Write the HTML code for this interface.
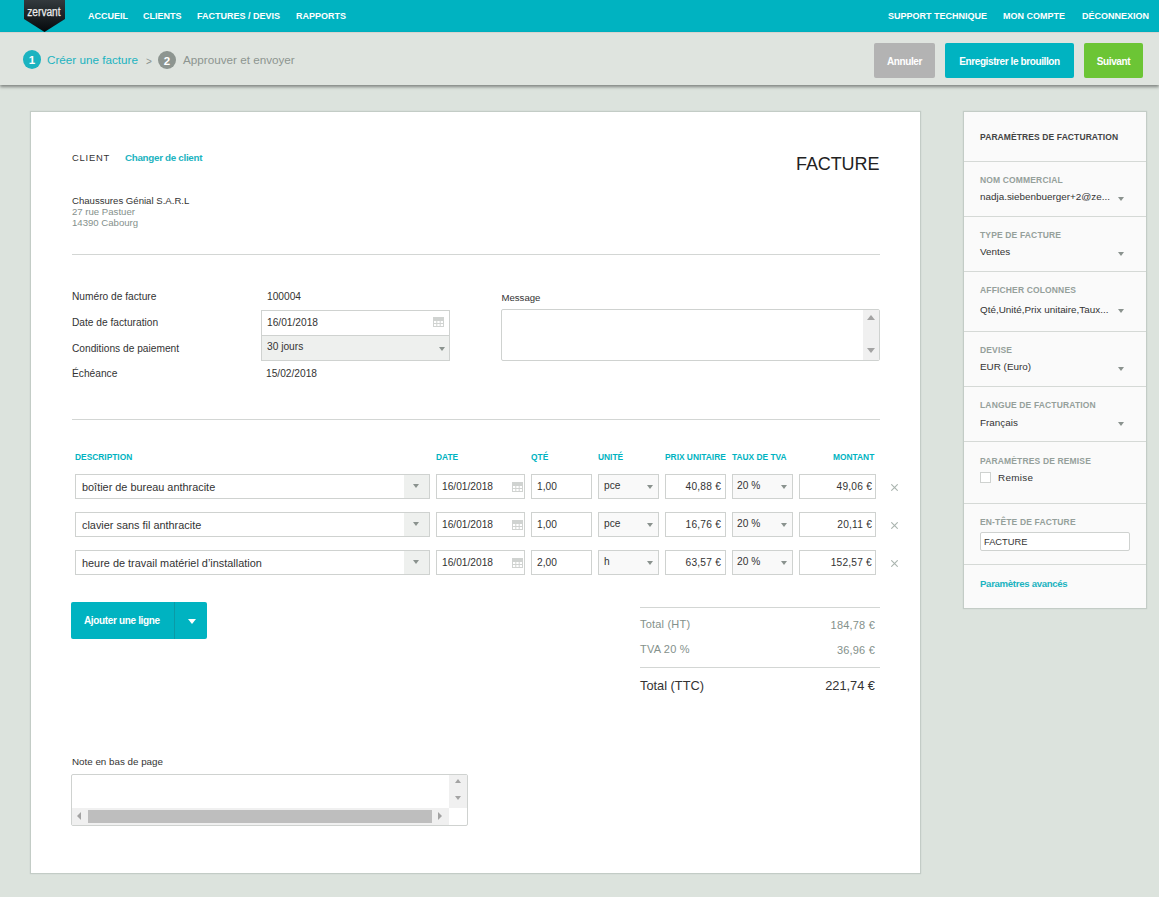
<!DOCTYPE html>
<html><head><meta charset="utf-8"><style>
*{margin:0;padding:0;box-sizing:border-box}
html,body{width:1159px;height:897px;overflow:hidden;background:#dce3dd;font-family:"Liberation Sans",sans-serif;color:#333}
.a{position:absolute}
.t{position:absolute;white-space:nowrap;line-height:1}
#top{position:absolute;left:0;top:0;width:1159px;height:32px;background:#00b3c1}
.nav{color:#fff;font-weight:bold;font-size:9px}
#sub{position:absolute;left:0;top:32px;width:1159px;height:53px;background:#dfe4df;box-shadow:0 2px 3px rgba(0,0,0,.42);border-top:1px solid #d9d3cf}
.btn{position:absolute;top:43px;height:35px;border-radius:2px;color:#fff;font-weight:bold;font-size:10px;text-align:center;line-height:37px;letter-spacing:-0.4px}
#card{position:absolute;left:31px;top:112px;width:889px;height:761px;background:#fff;box-shadow:0 0 1px 1px rgba(150,160,155,.35)}
#side{position:absolute;left:964px;top:112px;width:182px;height:496px;background:#fafafa;box-shadow:0 0 1px 1px rgba(150,160,155,.35)}
.hr{position:absolute;height:1px;background:#d3d6d4}
.inp{position:absolute;border:1px solid #cfd2d0;background:#fff;height:25px}
.ddb{position:absolute;background:#eef0ee}
.tri{position:absolute;width:0;height:0;border-left:3.5px solid transparent;border-right:3.5px solid transparent;border-top:4px solid #8a928e}
.th{color:#00b3c1;font-weight:bold;font-size:8.4px}
.sl{color:#95a09b;font-weight:bold;font-size:8.5px;letter-spacing:0.15px}
.sv{color:#333;font-size:9.9px}
.sd{position:absolute;left:0;width:182px;height:1px;background:#d5d9d6}
.x{position:absolute;width:10px;height:10px}
</style></head><body>
<div id="top"></div>
<svg class="a" style="left:24px;top:0" width="41" height="33" viewBox="0 0 41 33">
<defs><linearGradient id="lg" x1="0" y1="0" x2="0" y2="1"><stop offset="0" stop-color="#33393d"/><stop offset="1" stop-color="#05090c"/></linearGradient></defs>
<path d="M0 0H41V19L20.5 32L0 19Z" fill="url(#lg)"/></svg>
<svg class="a" style="left:24px;top:0" width="41" height="33"><text x="3.3" y="16.4" font-family="Liberation Sans" font-size="12" textLength="33.3" lengthAdjust="spacingAndGlyphs" fill="#ececec" stroke="#ececec" stroke-width="0.25">zervant</text></svg>
<div class="t nav" style="left:88px;top:11.5px">ACCUEIL</div>
<div class="t nav" style="left:143px;top:11.5px">CLIENTS</div>
<div class="t nav" style="left:197px;top:11.5px">FACTURES / DEVIS</div>
<div class="t nav" style="left:296px;top:11.5px">RAPPORTS</div>
<div class="t nav" style="left:888px;top:11.5px">SUPPORT TECHNIQUE</div>
<div class="t nav" style="left:1003px;top:11.5px">MON COMPTE</div>
<div class="t nav" style="left:1082px;top:11.5px">DÉCONNEXION</div>
<div id="sub"></div>
<div class="a" style="left:23px;top:50px;width:18px;height:18.5px;border-radius:50%;background:#1bb3c0;color:#fff;font-size:11.5px;font-weight:bold;text-align:center;line-height:20.5px">1</div>
<div class="t" style="left:47px;top:54px;font-size:11.7px;color:#1bb3c0">Créer une facture</div>
<div class="t" style="left:146px;top:57px;font-size:10px;color:#8a928e">&gt;</div>
<div class="a" style="left:158px;top:50.5px;width:18px;height:18.5px;border-radius:50%;background:#8d9590;color:#fff;font-size:11.5px;font-weight:bold;text-align:center;line-height:20.5px">2</div>
<div class="t" style="left:183px;top:54px;font-size:11.7px;color:#8d9590">Approuver et envoyer</div>
<div class="btn" style="left:874px;width:61px;background:#b3b3b3">Annuler</div>
<div class="btn" style="left:945px;width:129px;background:#00b3c1">Enregistrer le brouillon</div>
<div class="btn" style="left:1084px;width:59px;background:#6cc535">Suivant</div>
<div id="card"></div><div id="side"></div>
<div class="t" style="left:72px;top:152.5px;font-size:9.4px;color:#333;letter-spacing:0.8px">CLIENT</div>
<div class="t" style="left:125px;top:152.5px;font-size:9.8px;color:#1bb3c0;font-weight:bold;letter-spacing:-0.3px">Changer de client</div>
<div class="t" style="left:796px;top:154.5px;font-size:18px;color:#222;letter-spacing:-0.1px">FACTURE</div>
<div class="t" style="left:72px;top:195.5px;font-size:9.6px;color:#333">Chaussures Génial S.A.R.L</div>
<div class="t" style="left:72px;top:206.5px;font-size:9.6px;color:#85918c">27 rue Pastuer</div>
<div class="t" style="left:72px;top:217.5px;font-size:9.6px;color:#85918c">14390 Cabourg</div>
<div class="hr" style="left:72px;top:254px;width:808px"></div>
<div class="t" style="left:72px;top:292px;font-size:10.2px">Numéro de facture</div>
<div class="t" style="left:267px;top:292px;font-size:10.2px">100004</div>
<div class="t" style="left:72px;top:318px;font-size:10.2px">Date de facturation</div>
<div class="inp" style="left:261px;top:310px;width:189px;height:26px"></div>
<div class="t" style="left:267px;top:318px;font-size:10.2px">16/01/2018</div>
<svg class="a" style="left:433px;top:317px" width="11" height="10" viewBox="0 0 11 10"><g fill="none" stroke="#d0d3d1" stroke-width="1"><rect x="0.5" y="0.5" width="10" height="9"/><path d="M0.5 3.5H10.5M0.5 6.5H10.5M3.8 3V10M7.2 3V10"/></g><rect x="0.5" y="0.5" width="10" height="2.5" fill="#d0d3d1"/></svg>
<div class="t" style="left:72px;top:344px;font-size:10.2px">Conditions de paiement</div>
<div class="a" style="left:261px;top:335px;width:189px;height:26px;background:#eef0ee;border:1px solid #cfd2d0"></div>
<div class="t" style="left:267px;top:342px;font-size:10.2px">30 jours</div>
<div class="tri" style="left:438.5px;top:346.5px"></div>
<div class="t" style="left:72px;top:369px;font-size:10.2px">Échéance</div>
<div class="t" style="left:266px;top:369px;font-size:10.2px">15/02/2018</div>
<div class="t" style="left:501.5px;top:292.5px;font-size:9.6px">Message</div>
<div class="inp" style="left:501px;top:309px;width:379px;height:52px;border-radius:2px"></div>
<div class="ddb" style="left:863px;top:310px;width:16px;height:50px;background:#f0f0f0"></div>
<div class="tri" style="left:867px;top:314.5px;border-left-width:4px;border-right-width:4px;border-top:0;border-bottom:5px solid #a3a3a3"></div>
<div class="tri" style="left:867px;top:347.5px;border-left-width:4px;border-right-width:4px;border-top:5px solid #a3a3a3"></div>
<div class="hr" style="left:72px;top:419px;width:808px"></div>
<div class="t th" style="left:75px;top:452.5px">DESCRIPTION</div>
<div class="t th" style="left:436px;top:452.5px">DATE</div>
<div class="t th" style="left:531px;top:452.5px">QTÉ</div>
<div class="t th" style="left:598px;top:452.5px">UNITÉ</div>
<div class="t th" style="left:665px;top:452.5px">PRIX UNITAIRE</div>
<div class="t th" style="left:732px;top:452.5px">TAUX DE TVA</div>
<div class="t th" style="left:833px;top:452.5px">MONTANT</div>
<div class="inp" style="left:75px;top:474px;width:355px"></div>
<div class="ddb" style="left:404px;top:475px;width:25px;height:23px"></div>
<div class="tri" style="left:413px;top:484px"></div>
<div class="t" style="left:82px;top:482px;font-size:10.9px">boîtier de bureau anthracite</div>
<div class="inp" style="left:436px;top:474px;width:89px"></div>
<div class="t" style="left:442px;top:482px;font-size:10.2px">16/01/2018</div>
<svg class="a" style="left:512px;top:482px" width="11" height="10" viewBox="0 0 11 10"><g fill="none" stroke="#d0d3d1" stroke-width="1"><rect x="0.5" y="0.5" width="10" height="9"/><path d="M0.5 3.5H10.5M0.5 6.5H10.5M3.8 3V10M7.2 3V10"/></g><rect x="0.5" y="0.5" width="10" height="2.5" fill="#d0d3d1"/></svg>
<div class="inp" style="left:531px;top:474px;width:61px"></div>
<div class="t" style="left:537px;top:482px;font-size:10.2px">1,00</div>
<div class="inp" style="left:598px;top:474px;width:61px;background:#f9f9f9"></div>
<div class="t" style="left:604px;top:481px;font-size:10.2px">pce</div>
<div class="tri" style="left:646.5px;top:485px"></div>
<div class="inp" style="left:665px;top:474px;width:61px"></div>
<div class="t" style="right:438px;top:482px;font-size:10.2px;letter-spacing:0.2px">40,88 €</div>
<div class="inp" style="left:732px;top:474px;width:61px;background:#f9f9f9"></div>
<div class="t" style="left:737px;top:481px;font-size:10.2px">20 %</div>
<div class="tri" style="left:780.5px;top:485px"></div>
<div class="inp" style="left:799px;top:474px;width:77px"></div>
<div class="t" style="right:287px;top:482px;font-size:10.2px;letter-spacing:0.2px">49,06 €</div>
<svg class="a" style="left:890.5px;top:484px" width="7" height="7" viewBox="0 0 7 7"><path d="M0.3 0.3L6.7 6.7M6.7 0.3L0.3 6.7" stroke="#aab4af" stroke-width="1.1"/></svg>
<div class="inp" style="left:75px;top:512px;width:355px"></div>
<div class="ddb" style="left:404px;top:513px;width:25px;height:23px"></div>
<div class="tri" style="left:413px;top:522px"></div>
<div class="t" style="left:82px;top:520px;font-size:10.9px">clavier sans fil anthracite</div>
<div class="inp" style="left:436px;top:512px;width:89px"></div>
<div class="t" style="left:442px;top:520px;font-size:10.2px">16/01/2018</div>
<svg class="a" style="left:512px;top:520px" width="11" height="10" viewBox="0 0 11 10"><g fill="none" stroke="#d0d3d1" stroke-width="1"><rect x="0.5" y="0.5" width="10" height="9"/><path d="M0.5 3.5H10.5M0.5 6.5H10.5M3.8 3V10M7.2 3V10"/></g><rect x="0.5" y="0.5" width="10" height="2.5" fill="#d0d3d1"/></svg>
<div class="inp" style="left:531px;top:512px;width:61px"></div>
<div class="t" style="left:537px;top:520px;font-size:10.2px">1,00</div>
<div class="inp" style="left:598px;top:512px;width:61px;background:#f9f9f9"></div>
<div class="t" style="left:604px;top:519px;font-size:10.2px">pce</div>
<div class="tri" style="left:646.5px;top:523px"></div>
<div class="inp" style="left:665px;top:512px;width:61px"></div>
<div class="t" style="right:438px;top:520px;font-size:10.2px;letter-spacing:0.2px">16,76 €</div>
<div class="inp" style="left:732px;top:512px;width:61px;background:#f9f9f9"></div>
<div class="t" style="left:737px;top:519px;font-size:10.2px">20 %</div>
<div class="tri" style="left:780.5px;top:523px"></div>
<div class="inp" style="left:799px;top:512px;width:77px"></div>
<div class="t" style="right:287px;top:520px;font-size:10.2px;letter-spacing:0.2px">20,11 €</div>
<svg class="a" style="left:890.5px;top:522px" width="7" height="7" viewBox="0 0 7 7"><path d="M0.3 0.3L6.7 6.7M6.7 0.3L0.3 6.7" stroke="#aab4af" stroke-width="1.1"/></svg>
<div class="inp" style="left:75px;top:550px;width:355px"></div>
<div class="ddb" style="left:404px;top:551px;width:25px;height:23px"></div>
<div class="tri" style="left:413px;top:560px"></div>
<div class="t" style="left:82px;top:558px;font-size:10.9px">heure de travail matériel d’installation</div>
<div class="inp" style="left:436px;top:550px;width:89px"></div>
<div class="t" style="left:442px;top:558px;font-size:10.2px">16/01/2018</div>
<svg class="a" style="left:512px;top:558px" width="11" height="10" viewBox="0 0 11 10"><g fill="none" stroke="#d0d3d1" stroke-width="1"><rect x="0.5" y="0.5" width="10" height="9"/><path d="M0.5 3.5H10.5M0.5 6.5H10.5M3.8 3V10M7.2 3V10"/></g><rect x="0.5" y="0.5" width="10" height="2.5" fill="#d0d3d1"/></svg>
<div class="inp" style="left:531px;top:550px;width:61px"></div>
<div class="t" style="left:537px;top:558px;font-size:10.2px">2,00</div>
<div class="inp" style="left:598px;top:550px;width:61px;background:#f9f9f9"></div>
<div class="t" style="left:604px;top:557px;font-size:10.2px">h</div>
<div class="tri" style="left:646.5px;top:561px"></div>
<div class="inp" style="left:665px;top:550px;width:61px"></div>
<div class="t" style="right:438px;top:558px;font-size:10.2px;letter-spacing:0.2px">63,57 €</div>
<div class="inp" style="left:732px;top:550px;width:61px;background:#f9f9f9"></div>
<div class="t" style="left:737px;top:557px;font-size:10.2px">20 %</div>
<div class="tri" style="left:780.5px;top:561px"></div>
<div class="inp" style="left:799px;top:550px;width:77px"></div>
<div class="t" style="right:287px;top:558px;font-size:10.2px;letter-spacing:0.2px">152,57 €</div>
<svg class="a" style="left:890.5px;top:560px" width="7" height="7" viewBox="0 0 7 7"><path d="M0.3 0.3L6.7 6.7M6.7 0.3L0.3 6.7" stroke="#aab4af" stroke-width="1.1"/></svg>
<div class="a" style="left:71px;top:602px;width:136px;height:37px;background:#00b3c1;border-radius:2px"></div>
<div class="a" style="left:174px;top:602px;width:1px;height:37px;background:#0a9aa6"></div>
<div class="t" style="left:84px;top:615.5px;font-size:10px;color:#fff;font-weight:bold;letter-spacing:-0.35px">Ajouter une ligne</div>
<div class="tri" style="left:187.5px;top:618.5px;border-left-width:4px;border-right-width:4px;border-top:5px solid #fff"></div>
<div class="hr" style="left:640px;top:607px;width:240px"></div>
<div class="t" style="left:640px;top:618.5px;font-size:11px;color:#84918b;letter-spacing:0.2px">Total (HT)</div>
<div class="t" style="right:284px;top:619.5px;font-size:11px;color:#84918b;letter-spacing:0.2px">184,78 €</div>
<div class="t" style="left:640px;top:643.5px;font-size:11px;color:#84918b;letter-spacing:0.2px">TVA 20 %</div>
<div class="t" style="right:284px;top:644.5px;font-size:11px;color:#84918b;letter-spacing:0.2px">36,96 €</div>
<div class="hr" style="left:640px;top:667px;width:240px"></div>
<div class="t" style="left:640px;top:680px;font-size:12.8px;color:#333">Total (TTC)</div>
<div class="t" style="right:284px;top:680px;font-size:12.8px;color:#333">221,74 €</div>
<div class="t" style="left:72px;top:757px;font-size:9.8px">Note en bas de page</div>
<div class="inp" style="left:71px;top:774px;width:397px;height:52px;border-radius:2px"></div>
<div class="ddb" style="left:449px;top:775px;width:18px;height:33px;background:#f0f0f0"></div>
<div class="tri" style="left:454.5px;top:779px;border-top:0;border-bottom:4px solid #a3a3a3"></div>
<div class="tri" style="left:454.5px;top:796px;border-top-color:#a3a3a3"></div>
<div class="ddb" style="left:72px;top:808px;width:377px;height:17px;background:#f0f0f0"></div>
<div class="a" style="left:88px;top:810px;width:344px;height:13px;background:#bebebe"></div>
<div class="a" style="left:77px;top:812px;width:0;height:0;border-top:4px solid transparent;border-bottom:4px solid transparent;border-right:4px solid #a3a3a3"></div>
<div class="a" style="left:438px;top:812px;width:0;height:0;border-top:4px solid transparent;border-bottom:4px solid transparent;border-left:4px solid #a3a3a3"></div>
<div class="t" style="left:980px;top:132.5px;font-size:8.5px;font-weight:bold;color:#444;letter-spacing:0.1px">PARAMÈTRES DE FACTURATION</div>
<div class="sd a" style="left:964px;top:161px"></div>
<div class="t sl" style="left:980px;top:175.5px">NOM COMMERCIAL</div>
<div class="t sv" style="left:980px;top:192px">nadja.siebenbuerger+2@ze...</div>
<div class="tri" style="left:1117.5px;top:197px"></div>
<div class="sd a" style="left:964px;top:216px"></div>
<div class="t sl" style="left:980px;top:230.5px">TYPE DE FACTURE</div>
<div class="t sv" style="left:980px;top:247px">Ventes</div>
<div class="tri" style="left:1117.5px;top:252px"></div>
<div class="sd a" style="left:964px;top:271px"></div>
<div class="t sl" style="left:980px;top:285.5px">AFFICHER COLONNES</div>
<div class="t sv" style="left:980px;top:304.5px">Qté,Unité,Prix unitaire,Taux...</div>
<div class="tri" style="left:1117.5px;top:309px"></div>
<div class="sd a" style="left:964px;top:331px"></div>
<div class="t sl" style="left:980px;top:345.5px">DEVISE</div>
<div class="t sv" style="left:980px;top:362px">EUR (Euro)</div>
<div class="tri" style="left:1117.5px;top:367px"></div>
<div class="sd a" style="left:964px;top:386px"></div>
<div class="t sl" style="left:980px;top:400.5px">LANGUE DE FACTURATION</div>
<div class="t sv" style="left:980px;top:418px">Français</div>
<div class="tri" style="left:1117.5px;top:422px"></div>
<div class="sd a" style="left:964px;top:441px"></div>
<div class="t sl" style="left:980px;top:456.5px">PARAMÈTRES DE REMISE</div>
<div class="a" style="left:980px;top:472px;width:11px;height:11px;border:1px solid #cfd2d0;background:#fff"></div>
<div class="t sv" style="left:998px;top:473px;letter-spacing:0.3px">Remise</div>
<div class="sd a" style="left:964px;top:503px"></div>
<div class="t sl" style="left:980px;top:518px">EN-TÊTE DE FACTURE</div>
<div class="a" style="left:980px;top:532px;width:150px;height:19px;border:1px solid #cfd2d0;background:#fff;border-radius:2px"></div>
<div class="t sv" style="left:984px;top:537.5px;font-size:9.3px">FACTURE</div>
<div class="sd a" style="left:964px;top:564px"></div>
<div class="t" style="left:980px;top:578.5px;font-size:9.6px;font-weight:bold;color:#1bb3c0;letter-spacing:-0.3px">Paramètres avancés</div>
</body></html>
